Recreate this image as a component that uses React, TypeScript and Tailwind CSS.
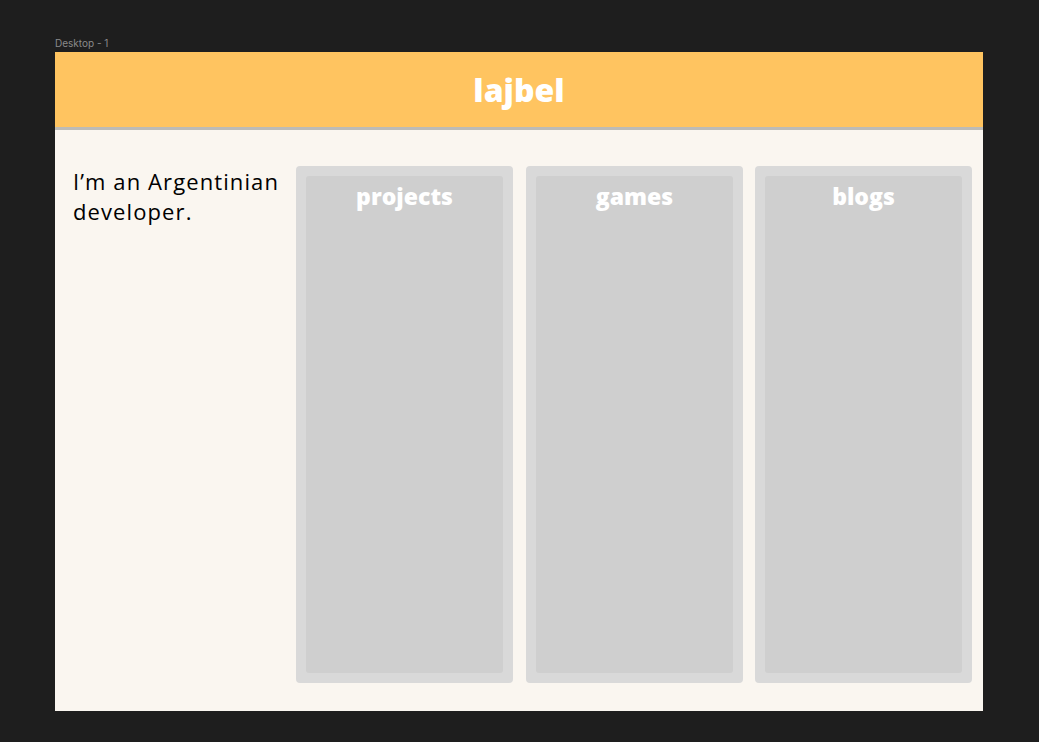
export default function App() {
  const cols = [
    { t: "projects", m: "" },
    { t: "games", m: "ml-[13px]" },
    { t: "blogs", m: "ml-[12px]" },
  ];
  return (
    <div
      className="w-[1039px] h-[742px] bg-[#1e1e1e] pl-[55px] pt-[36px]"
      style={{ fontFamily: '"Open Sans", "Noto Sans", sans-serif' }}
    >
      <div className="text-[10px] leading-[14px] text-[#8a8a8a] h-[16px]" style={{ fontFamily: '"Inter", sans-serif' }}>
        Desktop - 1
      </div>
      <div className="w-[928px] h-[659px] bg-[#faf6f0] flex flex-col">
        <div className="h-[75px] bg-[#ffc460] flex items-center justify-center shadow-[0_3px_0_0_#bdbbb6] relative">
          <span className="text-white font-extrabold text-[32px] leading-none">lajbel</span>
        </div>
        <div className="flex pt-[39px] pb-[28px] flex-1">
          <div className="w-[241px] pl-[18px] text-[22px] leading-[30px] text-black tracking-[1.1px]">
            I’m an Argentinian developer.
          </div>
          <div className="flex">
            {cols.map((c) => (
              <div key={c.t} className={`w-[217px] h-full bg-[#d9d9d9] rounded-[4px] p-[10px] ${c.m}`}>
                <div className="h-full bg-[#cfcfcf] rounded-[3px] pt-[5px] text-center">
                  <span className="text-white font-extrabold text-[23px] leading-[30px]">{c.t}</span>
                </div>
              </div>
            ))}
          </div>
        </div>
      </div>
    </div>
  );
}
